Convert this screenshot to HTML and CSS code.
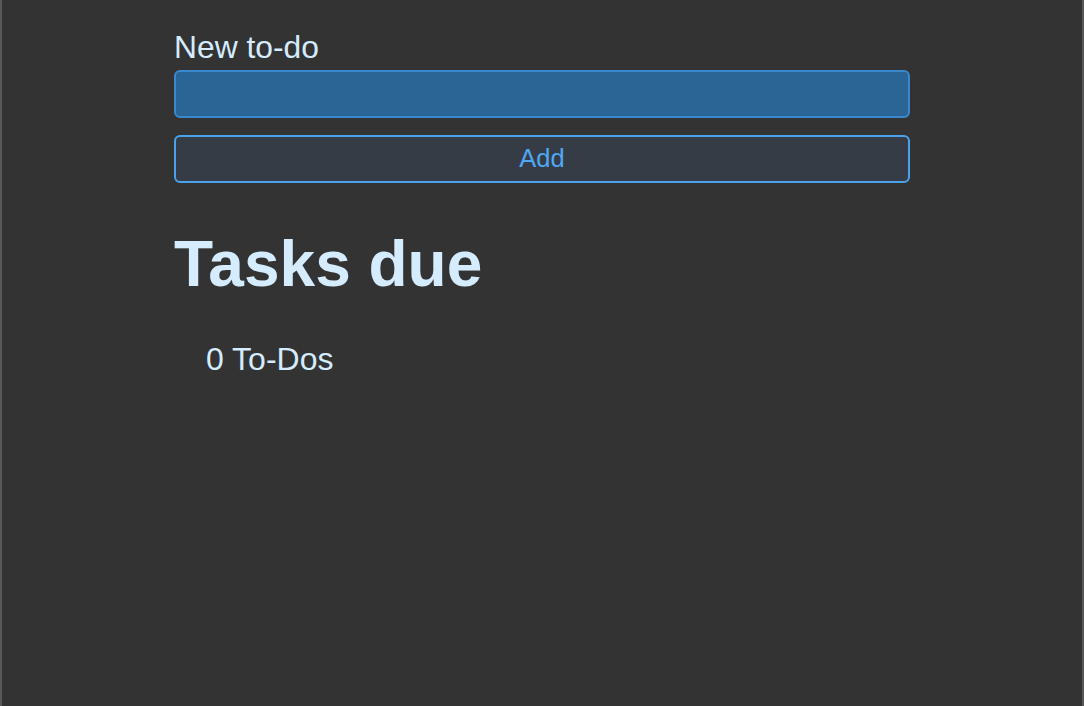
FILE: index.html
```html
<!DOCTYPE html>
<html lang="en">
<head>
<meta charset="utf-8">
<title>To-do</title>
<link rel="stylesheet" href="styles.css">
</head>
<body>
  <main class="app">
    <form class="new-todo">
      <label class="new-todo__label" for="todo">New to-do</label>
      <input class="new-todo__input" id="todo" type="text">
      <button class="new-todo__button" type="button">Add</button>
    </form>
    <h1 class="tasks__title">Tasks due</h1>
    <p class="tasks__count">0 To-Dos</p>
  </main>
</body>
</html>
```

FILE: styles.css
```css
html, body {
  margin: 0;
  padding: 0;
}

body {
  box-sizing: border-box;
  min-height: 100vh;
  background: #333333;
  border-left: 2px solid #595959;
  border-right: 2px solid #595959;
  font-family: "Liberation Sans", Arial, sans-serif;
  color: #d4ecfd;
}

.app {
  width: 736px;
  margin: 0 auto;
  padding-top: 29px;
}

.new-todo {
  display: flex;
  flex-direction: column;
  margin: 0;
}

.new-todo__label {
  font-size: 31.8px;
  line-height: 36px;
}

.new-todo__input {
  box-sizing: border-box;
  margin-top: 5px;
  width: 100%;
  height: 48px;
  border: 2px solid #3a89cf;
  border-radius: 6px;
  background: #2a6595;
  color: #d4ecfd;
  font: inherit;
  font-size: 24px;
  padding: 0 12px;
  outline: none;
}

.new-todo__button {
  box-sizing: border-box;
  margin-top: 17px;
  width: 100%;
  height: 48px;
  padding: 0 0 2px;
  border: 2px solid #4aa2ea;
  border-radius: 6px;
  background: #363c46;
  color: #4ea8f5;
  font-family: "Liberation Sans", Arial, sans-serif;
  font-size: 25.5px;
}

.tasks__title {
  margin: 45px 0 0;
  font-size: 64px;
  line-height: 72px;
  font-weight: bold;
}

.tasks__count {
  margin: 41px 0 0;
  padding-left: 32px;
  font-size: 32px;
  line-height: 36px;
}
```
